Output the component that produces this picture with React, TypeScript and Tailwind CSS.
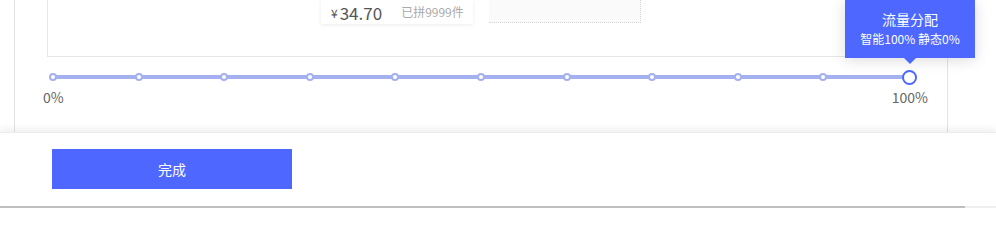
import React from 'react'

const ticks = Array.from({ length: 11 }, (_, i) => i * 10)

export default function App() {
  return (
    <div className="w-[996px] h-[208px] bg-white overflow-hidden flex flex-col" style={{ fontFamily: '"Microsoft YaHei", "Noto Sans CJK SC", "Noto Sans", sans-serif' }}>
      {/* top area */}
      <div className="h-[132px] flex-none">
        <div className="ml-[14px] w-[934px] h-full border-l border-r border-[#e3e3e3]">
          {/* preview box */}
          <div className="ml-[32px] h-[57px] border-l border-b border-[#e6e6e6] flex items-start">
            <div className="ml-[273px] w-[152px] h-[24px] bg-white shadow-[0_1px_4px_rgba(0,0,0,0.08)] flex items-center px-[10px] whitespace-nowrap">
              <span className="text-[12px] text-[#555] mt-[1px]">¥</span>
              <span className="text-[17px] leading-none text-[#555] ml-[2px]">34.70</span>
              <span className="text-[12px] text-[#aaa] ml-[19px]">已拼9999件</span>
            </div>
            <div className="ml-[16px] w-[152px] h-[23px] bg-[#fafafa] border-r border-b border-dotted border-[#d6d6d6]" />
          </div>

          {/* slider */}
          <div className="relative ml-[37px] w-[858px] h-[14px] mt-[13px]">
            <div className="absolute left-[1px] right-[1px] top-[5px] h-[4px] bg-[#a5b0f0]" />
            {ticks.slice(0, 10).map(t => (
              <div
                key={t}
                className="absolute top-[3px] w-[8px] h-[8px] -ml-[4px] rounded-full bg-white border-2 border-[#a5b0f0]"
                style={{ left: `calc(1px + ${t} * (100% - 2px) / 100)` }}
              />
            ))}
            <div className="absolute right-[-7px] top-0 w-[15px] h-[15px] rounded-full bg-white border-2 border-[#4d67ff]" />
            {/* tooltip */}
            <div className="absolute right-[-65px] bottom-[26px] w-[130px] h-[58px] bg-[#4d67ff] text-white shadow-[0_2px_14px_rgba(0,0,0,0.14)] flex flex-col items-center justify-center whitespace-nowrap">
              <div className="text-[14px] leading-[18px]">流量分配</div>
              <div className="text-[12px] leading-[18px] mt-[2px]">智能100% 静态0%</div>
              <div className="absolute left-1/2 -ml-[6px] bottom-[-6px] w-0 h-0 border-l-[6px] border-r-[6px] border-t-[6px] border-l-transparent border-r-transparent border-t-[#4d67ff]" />
            </div>
          </div>
          <div className="ml-[28px] w-[885px] flex justify-between mt-[3px] text-[14px] leading-[20px] text-[#666]">
            <span>0%</span>
            <span>100%</span>
          </div>
        </div>
      </div>

      {/* footer */}
      <div className="relative flex-1 bg-white shadow-[0_-3px_8px_rgba(0,0,0,0.07)] border-t border-[#ececec]">
        <button className="ml-[52px] mt-[16px] w-[240px] h-[40px] bg-[#4d67ff] text-white text-[14px]">完成</button>
      </div>
      <div className="h-[2px] flex-none flex">
        <div className="w-[965px] bg-[#c1c1c1]" />
        <div className="flex-1 bg-[#f1f1f1]" />
      </div>
    </div>
  )
}
